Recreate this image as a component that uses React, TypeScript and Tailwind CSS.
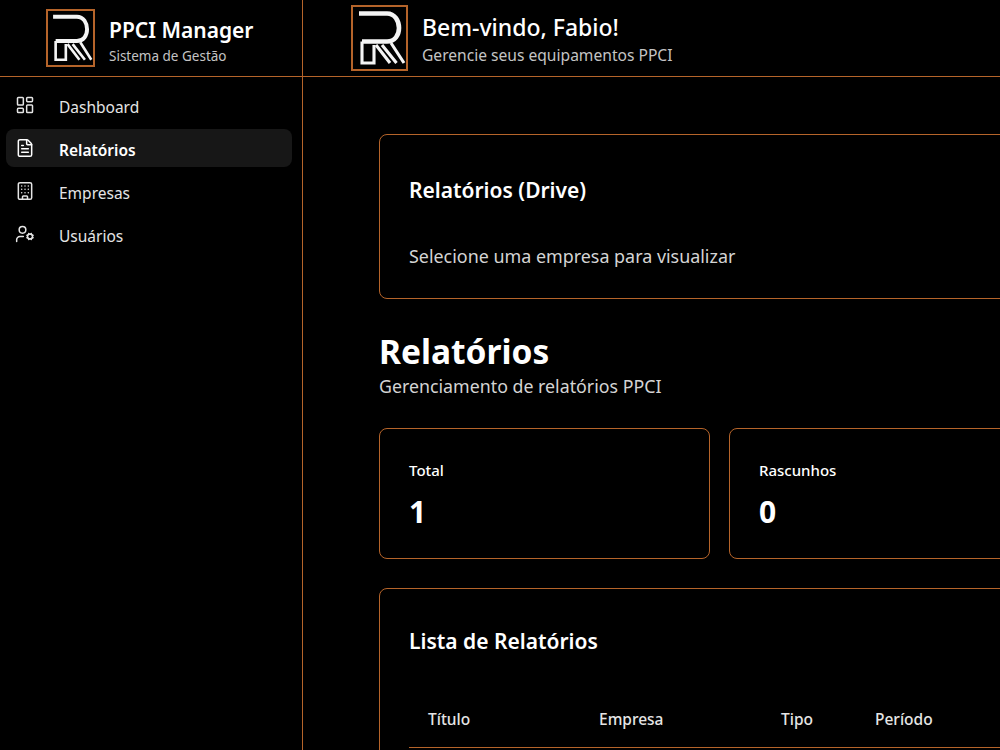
import { LayoutDashboard, FileText, Building, UserCog } from "lucide-react";

function Logo({ className }: { className: string }) {
  return (
    <div className={`shrink-0 border-2 border-[#b5642a] bg-black ${className}`}>
      <svg viewBox="4 4 53 62" preserveAspectRatio="none" className="h-full w-full" fill="none" stroke="#f4f4f4">
        <path d="M10 10.5H38C46 10.5 50 18 50 25C50 32 46 38.5 38 38.5H13" strokeWidth="4.6" />
        <path d="M13 38.5V60H25V42" strokeWidth="3.1" />
        <path d="M27 42L41 60M33 42L47.5 60M42 40L55 60" strokeWidth="3.1" />
      </svg>
    </div>
  );
}

function NavItem({ icon, label, active }: { icon: React.ReactNode; label: string; active?: boolean }) {
  return (
    <div className={`flex h-[38px] items-center gap-[24px] rounded-lg px-[9px] text-[15.5px] ${active ? "bg-[#171717] font-semibold text-white" : "text-[#e5e5e5]"}`}>
      {icon}
      <span className="pt-[6px]">{label}</span>
    </div>
  );
}

export default function App() {
  return (
    <div className="flex h-[750px] w-[1000px] overflow-hidden bg-black text-white [font-family:'Noto_Sans',sans-serif]">
      <aside className="flex w-[303px] shrink-0 flex-col border-r border-[#b5642a]">
        <div className="flex h-[77px] items-center gap-[14px] border-b border-[#b5642a] pb-[1px] pl-[46px]">
          <Logo className="h-[58px] w-[49px]" />
          <div className="pt-[7px]">
            <div className="text-[21px] leading-[26px] font-semibold">PPCI Manager</div>
            <div className="mt-[3px] text-[13.5px] leading-[20px] text-[#c4c4c4]">Sistema de Gestão</div>
          </div>
        </div>
        <nav className="flex flex-col gap-[5px] pt-[9px] pr-[10px] pl-[6px]">
          <NavItem icon={<LayoutDashboard size={20} strokeWidth={1.8} />} label="Dashboard" />
          <NavItem icon={<FileText size={20} strokeWidth={1.8} />} label="Relatórios" active />
          <NavItem icon={<Building size={20} strokeWidth={1.8} />} label="Empresas" />
          <NavItem icon={<UserCog size={20} strokeWidth={1.8} />} label="Usuários" />
        </nav>
      </aside>
      <div className="flex min-w-0 flex-1 flex-col">
        <header className="flex h-[77px] shrink-0 items-center gap-[14px] border-b border-[#b5642a] pl-[48px]">
          <Logo className="h-[66px] w-[57px]" />
          <div className="pt-[2px]">
            <div className="text-[23px] leading-[30px] font-medium">Bem-vindo, Fabio!</div>
            <div className="mt-[2px] text-[15.6px] leading-[22px] text-[#c4c4c4]">Gerencie seus equipamentos PPCI</div>
          </div>
        </header>
        <main className="w-[1300px] pt-[57px] pl-[76px]">
          <section className="h-[165px] rounded-lg border border-[#b5642a] px-[29px] pt-[40px]">
            <h2 className="text-[21px] leading-[30px] font-semibold">Relatórios (Drive)</h2>
            <p className="mt-[39px] text-[17.9px] leading-[24px] text-[#d4d4d4]">Selecione uma empresa para visualizar</p>
          </section>
          <h1 className="mt-[31px] text-[33.5px] leading-[42px] font-bold">Relatórios</h1>
          <p className="mt-[2px] text-[17.8px] leading-[24px] text-[#d4d4d4]">Gerenciamento de relatórios PPCI</p>
          <div className="mt-[30px] flex gap-[19px]">
            {[["Total", "1"], ["Rascunhos", "0"], ["", ""]].map(([a, b], i) => (
              <div key={i} className="h-[131px] w-[331px] rounded-lg border border-[#b5642a] px-[29px] pt-[29px]">
                <div className="text-[15px] leading-[24px] font-medium">{a}</div>
                <div className="mt-[12px] text-[30px] leading-[36px] font-bold">{b}</div>
              </div>
            ))}
          </div>
          <section className="mt-[29px] h-[400px] rounded-lg border border-[#b5642a] px-[29px] pt-[37px]">
            <h2 className="text-[21px] leading-[30px] font-semibold">Lista de Relatórios</h2>
            <div className="mt-[35px] flex h-[57px] items-center border-b border-[#b5642a] pt-[2px] text-[15.5px] font-medium text-[#e5e5e5]">
              <span className="w-[171px] pl-[19px]">Título</span>
              <span className="w-[182px] pl-[19px]">Empresa</span>
              <span className="w-[94px] pl-[19px]">Tipo</span>
              <span className="pl-[19px]">Período</span>
            </div>
          </section>
        </main>
      </div>
    </div>
  );
}
